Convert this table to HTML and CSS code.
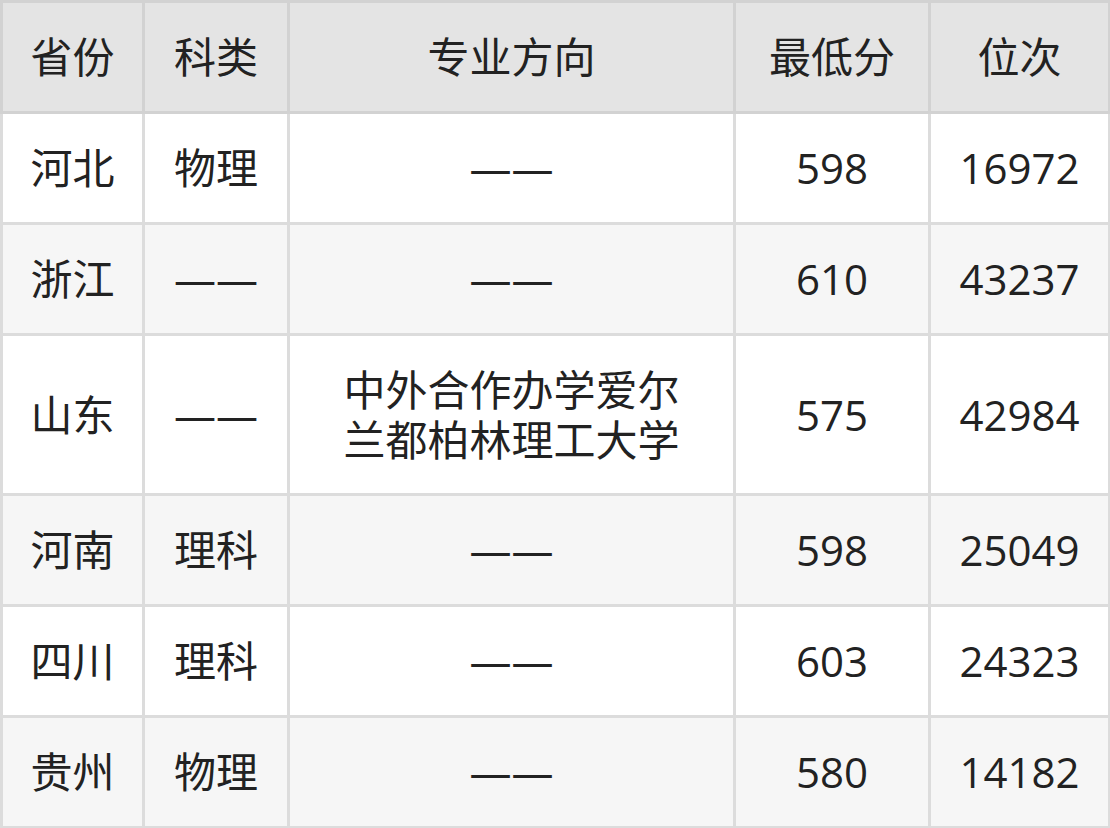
FILE: index.html
```html
<!DOCTYPE html>
<html lang="zh-CN">
<head>
<meta charset="utf-8">
<title>分数线</title>
<link rel="stylesheet" href="styles.css">
</head>
<body>
<table class="score-table">
  <colgroup>
    <col class="c-prov">
    <col class="c-type">
    <col class="c-major">
    <col class="c-score">
    <col class="c-rank">
  </colgroup>
  <thead>
    <tr class="head-row">
      <th>省份</th>
      <th>科类</th>
      <th>专业方向</th>
      <th>最低分</th>
      <th>位次</th>
    </tr>
  </thead>
  <tbody>
    <tr class="row">
      <td>河北</td><td>物理</td><td>——</td><td>598</td><td>16972</td>
    </tr>
    <tr class="row alt">
      <td>浙江</td><td>——</td><td>——</td><td>610</td><td>43237</td>
    </tr>
    <tr class="row tall">
      <td>山东</td><td>——</td><td class="major">中外合作办学爱尔兰都柏林理工大学</td><td>575</td><td>42984</td>
    </tr>
    <tr class="row alt">
      <td>河南</td><td>理科</td><td>——</td><td>598</td><td>25049</td>
    </tr>
    <tr class="row">
      <td>四川</td><td>理科</td><td>——</td><td>603</td><td>24323</td>
    </tr>
    <tr class="row alt">
      <td>贵州</td><td>物理</td><td>——</td><td>580</td><td>14182</td>
    </tr>
  </tbody>
</table>
</body>
</html>
```

FILE: styles.css
```css
html, body {
  margin: 0;
  padding: 0;
  background: #ffffff;
}

.score-table {
  border-collapse: collapse;
  table-layout: fixed;
  width: 1108px;
  font-family: "Open Sans", "Noto Sans CJK SC", sans-serif;
  font-size: 42px;
  color: #222222;
}

.c-prov { width: 142px; }
.c-type { width: 145px; }
.c-major { width: 446px; }
.c-score { width: 195px; }
.c-rank { width: 180px; }

.score-table th,
.score-table td {
  border: 3px solid #dcdcdc;
  text-align: center;
  vertical-align: middle;
  padding: 0;
  line-height: 50px;
  font-weight: normal;
}

.head-row th {
  background: #e4e4e4;
  border-color: #d2d2d2;
  height: 108px;
}

.row td {
  background: #ffffff;
  height: 108px;
}

.row.alt td {
  background: #f6f6f6;
}

.row.tall td {
  height: 157px;
}

.score-table td.major {
  padding: 0 38px;
}
```
